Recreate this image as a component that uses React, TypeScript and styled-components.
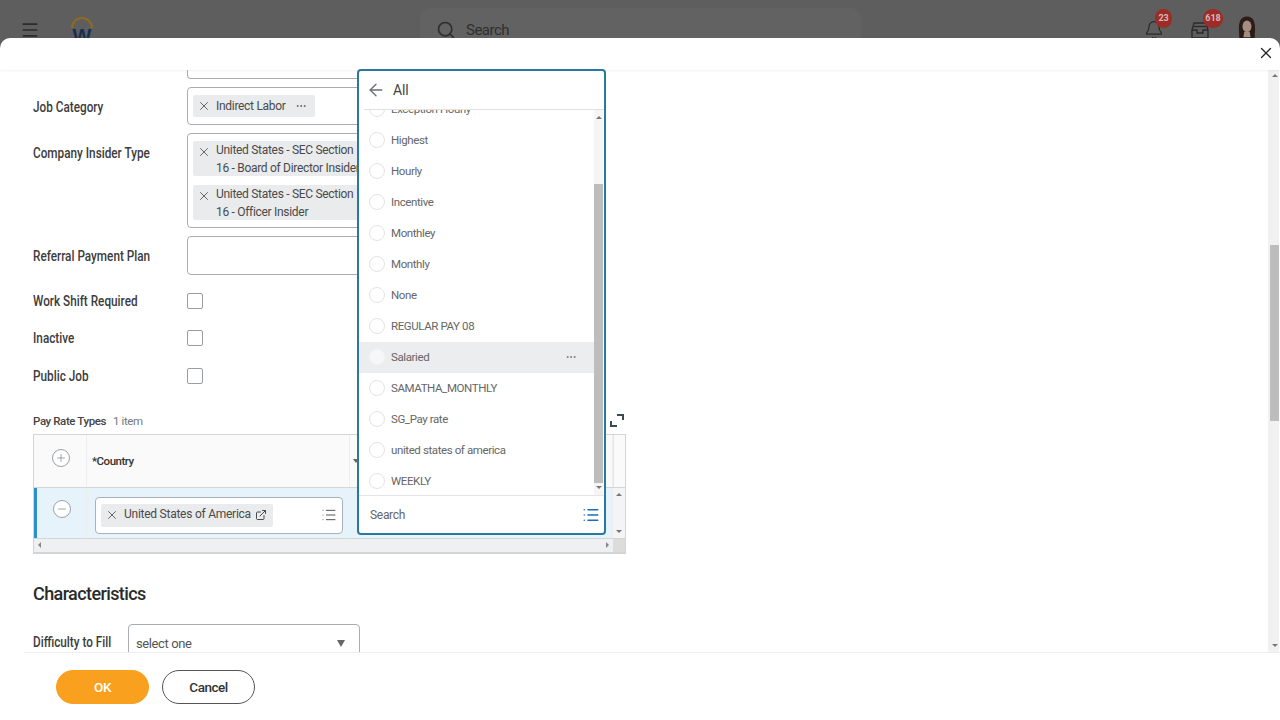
import { ArrowLeft, Bell, ExternalLink, List, Menu, Minus, MoreHorizontal, Plus, Search, X } from "lucide-react";
import styled, { createGlobalStyle } from "styled-components";

const GlobalStyle = createGlobalStyle`
  html, body {
    margin: 0;
    padding: 0;
    background: #5e5e5e;
  }
  * {
    box-sizing: border-box;
  }
`;

const Page = styled.div`
  width: 1280px;
  height: 720px;
  display: flex;
  flex-direction: column;
  overflow: hidden;
  background: #5e5e5e;
  font-family: Roboto, "Liberation Sans", sans-serif;
`;

const TopBar = styled.header`
  height: 38px;
  flex: none;
  display: flex;
  align-items: flex-start;
  overflow: hidden;
  padding: 8px 24px 0 20px;
  color: #2b2b2b;
`;
const MenuButton = styled.div`
  width: 20px;
  margin-top: 12px;
  display: flex;
`;
const Logo = styled.div`
  width: 24px;
  margin: 7px 0 0 30px;
  display: flex;
  flex-direction: column;
  align-items: center;
  position: relative;
`;
const LogoW = styled.span`
  position: absolute;
  top: 10px;
  font: 700 20px "Liberation Sans", sans-serif;
  color: #17304f;
`;
const SearchBox = styled.div`
  width: 442px;
  height: 40px;
  margin-left: 326px;
  padding: 3px 0 0 16px;
  display: flex;
  align-items: center;
  gap: 10px;
  border-radius: 10px 10px 0 0;
  background: #626262;
  font-size: 15px;
  letter-spacing: -0.5px;
  color: #2f2f2f;
`;
const NoticeIcon = styled.div<{ $left: number }>`
  width: 18px;
  margin: 12px 0 0 ${(p) => p.$left}px;
  position: relative;
`;
const Badge = styled.span<{ $right: number; $w: number }>`
  position: absolute;
  top: -11px;
  right: ${(p) => p.$right}px;
  width: ${(p) => p.$w}px;
  height: 19px;
  border-radius: 10px;
  background: #9c2c26;
  color: #d8b8b6;
  font-size: 9px;
  font-weight: 700;
  line-height: 19px;
  text-align: center;
`;
const Avatar = styled.svg`
  margin: 7px 0 0 29px;
`;

const Modal = styled.main`
  flex: 1;
  min-height: 0;
  position: relative;
  display: flex;
  flex-direction: column;
  background: #fff;
  border-radius: 10px 10px 0 0;
`;
const ModalHeader = styled.div`
  height: 32px;
  flex: none;
  display: flex;
  align-items: center;
  justify-content: flex-end;
  padding: 0 5px 2px 0;
  color: #222;
  box-shadow: 0 1px 2px rgba(0, 0, 0, 0.05);
  position: relative;
  z-index: 1;
`;
const ModalBody = styled.div`
  flex: 1;
  min-height: 0;
  display: flex;
  overflow: hidden;
`;
const Form = styled.form`
  flex: 1;
  padding-left: 33px;
  display: flex;
  flex-direction: column;
  align-items: flex-start;
`;
const CutOffBox = styled.div`
  width: 300px;
  height: 9px;
  margin-left: 154px;
  flex: none;
  border: 1px solid #a9adb1;
  border-top: 0;
  border-radius: 0 0 4px 4px;
`;
const Row = styled.div<{ $top: number; $h?: number }>`
  display: flex;
  flex: none;
  align-items: flex-start;
  margin-top: ${(p) => p.$top}px;
  height: ${(p) => (p.$h ? `${p.$h}px` : "auto")};
`;
const CheckRow = styled.div`
  height: 37.5px;
  flex: none;
  display: flex;
  align-items: center;
`;
const CheckGroup = styled.div`
  margin-top: 7px;
  display: flex;
  flex-direction: column;
`;
const Label = styled.label<{ $w?: number; $pt?: number }>`
  width: ${(p) => p.$w ?? 154}px;
  flex: none;
  padding-top: ${(p) => p.$pt ?? 0}px;
  font-size: 14px;
  font-weight: 500;
  color: #3c3c3c;
  white-space: nowrap;
  transform: scaleX(0.84);
  transform-origin: left center;
`;
const InputBox = styled.div<{ $h?: number }>`
  width: 300px;
  min-height: ${(p) => p.$h ?? 38}px;
  padding: 7px 5px;
  display: flex;
  flex-direction: column;
  align-items: flex-start;
  gap: 9px;
  border: 1px solid #a9adb1;
  border-radius: 4px;
  background: #fff;
`;
const Chip = styled.div`
  display: flex;
  align-items: flex-start;
  flex: none;
  min-height: 22px;
  padding: 0 8px 0 4px;
  background: #e9ebec;
  border-radius: 2px;
  font-size: 12px;
  line-height: 17.5px;
  letter-spacing: -0.3px;
  color: #4a4a4a;
  white-space: nowrap;
`;
const ChipClose = styled.span`
  width: 19px;
  flex: none;
  display: flex;
  align-items: center;
  height: 22px;
  color: #555;
`;
const ChipText = styled.span<{ $single?: boolean }>`
  padding: ${(p) => (p.$single ? "3px 0 1px" : "1px 0 0")};
  margin-bottom: ${(p) => (p.$single ? "0" : "-1px")};
`;
const ChipMenu = styled.span`
  display: flex;
  align-items: center;
  height: 22px;
  margin-left: 9px;
  color: #666;
`;
const Checkbox = styled.span`
  width: 16px;
  height: 16px;
  border: 1px solid #9a9ea2;
  border-radius: 2px;
  background: #fff;
`;
const CaptionRow = styled.div`
  width: 593px;
  height: 20px;
  margin-top: 16px;
  flex: none;
  padding-right: 2px;
  display: flex;
  align-items: center;
  gap: 7px;
  font-size: 11.5px;
  letter-spacing: -0.4px;
  color: #777;
`;
const CaptionTitle = styled.span`
  font-weight: 500;
  color: #444;
`;
const ExpandIcon = styled.svg`
  margin-left: auto;
`;

const Table = styled.div`
  width: 593px;
  height: 120px;
  margin-top: 3px;
  flex: none;
  display: flex;
  flex-direction: column;
  border: 1px solid #d3d6d8;
  border-bottom-width: 2px;
`;
const TableRow = styled.div<{ $h: number; $active?: boolean }>`
  height: ${(p) => p.$h}px;
  flex: none;
  display: grid;
  grid-template-columns: 53px 263px 1fr 12px;
  background: ${(p) => (p.$active ? "#e7f3fa" : "#fafafa")};
  border-bottom: 1px solid #d3d6d8;
  box-shadow: ${(p) => (p.$active ? "inset 3px 0 0 #2e8fcf" : "none")};
`;
const Cell = styled.div<{ $pad?: string }>`
  display: flex;
  align-items: center;
  padding: ${(p) => p.$pad ?? "0"};
  border-right: 1px solid #eceeef;
`;
const RoundButton = styled.span<{ $top: number; $left: number }>`
  width: 18px;
  height: 18px;
  margin: ${(p) => p.$top}px 0 0 ${(p) => p.$left}px;
  display: flex;
  align-items: center;
  justify-content: center;
  align-self: flex-start;
  border: 1px solid #98a2a8;
  border-radius: 50%;
  color: #7f8a90;
  background: #fff;
`;
const ColumnTitle = styled.span`
  font-size: 11.5px;
  font-weight: 500;
  letter-spacing: -0.5px;
  color: #333;
`;
const SortMark = styled.span`
  width: 0;
  height: 0;
  margin-left: 3px;
  border: 3px solid transparent;
  border-top: 4px solid #666;
  border-bottom: 0;
`;
const RowInput = styled.div`
  width: 248px;
  height: 37px;
  margin-top: 9px;
  align-self: flex-start;
  padding: 0 5px;
  display: flex;
  align-items: center;
  border: 1px solid #a9b1b6;
  border-radius: 4px;
  background: #fff;
  color: #555;
`;
const RowChip = styled(Chip)`
  height: 23px;
  align-items: center;
  width: 172px;
  padding-right: 6px;
  letter-spacing: -0.25px;
`;
const LinkIcon = styled.span`
  margin-left: auto;
  display: flex;
`;
const RowList = styled.span`
  margin-left: auto;
  display: flex;
`;
const Track = styled.div<{ $w: number; $pl?: number; $mr?: number; $bg: string }>`
  width: ${(p) => p.$w}px;
  flex: none;
  margin-right: ${(p) => p.$mr ?? 0}px;
  padding-left: ${(p) => p.$pl ?? 0}px;
  display: flex;
  flex-direction: column;
  align-items: center;
  background: ${(p) => p.$bg};
`;
const Thumb = styled.div<{ $top: number; $h: number }>`
  width: 100%;
  height: ${(p) => p.$h}px;
  margin-top: ${(p) => p.$top}px;
  flex: none;
  background: #bdbdbd;
`;
const Arrow = styled.span<{ $dir: "up" | "down"; $gap: number }>`
  width: 0;
  height: 0;
  flex: none;
  border-left: 3px solid transparent;
  border-right: 3px solid transparent;
  border-${(p) => (p.$dir === "up" ? "bottom" : "top")}: 3px solid #777;
  margin-top: ${(p) => (p.$dir === "up" ? `${p.$gap}px` : "auto")};
  margin-bottom: ${(p) => (p.$dir === "down" ? `${p.$gap}px` : "0")};
`;
const RowScroll = styled.div`
  display: flex;
  flex-direction: column;
  align-items: center;
  justify-content: space-between;
  padding: 5px 0;
  background: #f3f4f5;
`;
const HeadEnd = styled.div`
  background: #fafafa;
  border-left: 1px solid #e4e6e7;
`;
const ScrollBar = styled.div`
  flex: 1;
  display: flex;
  align-items: center;
  background: #eef0f1;
  padding-left: 4px;
`;
const ScrollEnd = styled.div`
  width: 12px;
  align-self: stretch;
  margin-left: 4px;
  background: #dcdcdc;
`;
const SideArrow = styled.span<{ $dir: "left" | "right" }>`
  width: 0;
  height: 0;
  border-top: 3px solid transparent;
  border-bottom: 3px solid transparent;
  border-${(p) => (p.$dir === "left" ? "right" : "left")}: 3px solid #888;
  margin-left: ${(p) => (p.$dir === "right" ? "auto" : "0")};
`;
const SectionTitle = styled.h2`
  height: 24px;
  margin: 28px 0 0;
  flex: none;
  font-size: 18px;
  font-weight: 500;
  line-height: 24px;
  letter-spacing: -0.6px;
  color: #2a2a2a;
`;
const SelectBox = styled.div`
  width: 232px;
  height: 40px;
  padding: 0 14px 0 7px;
  display: flex;
  align-items: flex-start;
  justify-content: space-between;
  border: 1px solid #a9adb1;
  border-radius: 4px;
  font-size: 13px;
  line-height: 37px;
  letter-spacing: -0.4px;
  color: #555;
`;
const SelectCaret = styled.span`
  width: 0;
  height: 0;
  margin-top: 15px;
  border-left: 4px solid transparent;
  border-right: 4px solid transparent;
  border-top: 7px solid #666;
`;

const Footer = styled.footer`
  height: 68px;
  flex: none;
  margin-left: 24px;
  padding: 17px 0 0 32px;
  display: flex;
  align-items: flex-start;
  gap: 13px;
  border-top: 1px solid #eee;
`;
const PillButton = styled.button<{ $primary?: boolean }>`
  width: 93px;
  height: 34px;
  padding: 0;
  border-radius: 17px;
  border: 1px solid ${(p) => (p.$primary ? "#f9a11f" : "#555")};
  background: ${(p) => (p.$primary ? "#f9a11f" : "#fff")};
  color: ${(p) => (p.$primary ? "#fff" : "#333")};
  font: 500 13.5px Roboto, sans-serif;
  letter-spacing: -0.5px;
`;

const Popup = styled.section`
  position: absolute;
  top: 31px;
  left: 357px;
  width: 249px;
  height: 466px;
  z-index: 2;
  display: flex;
  flex-direction: column;
  background: #fff;
  border: 2px solid #28799d;
  border-radius: 4px;
`;
const PopupHeader = styled.div`
  height: 39px;
  flex: none;
  margin-left: 5px;
  padding-left: 2px;
  display: flex;
  align-items: center;
  gap: 7px;
  border-bottom: 1px solid #dfe1e2;
  color: #6b6f72;
`;
const PopupTitle = styled.span`
  font-size: 14px;
  letter-spacing: -0.2px;
  color: #444;
`;
const PopupList = styled.div`
  flex: 1;
  min-height: 0;
  display: flex;
`;
const Options = styled.ul`
  flex: 1;
  margin: 0;
  padding: 0;
  overflow: hidden;
  list-style: none;
`;
const Option = styled.li<{ $hover?: boolean; $first?: boolean }>`
  height: 31px;
  margin-top: ${(p) => (p.$first ? "-16.5px" : "0")};
  padding: 0 17px 0 10px;
  display: flex;
  align-items: center;
  gap: 6px;
  background: ${(p) => (p.$hover ? "#ebedee" : "transparent")};
  font-size: 11.5px;
  letter-spacing: -0.4px;
  color: #666;
`;
const Radio = styled.span<{ $hover?: boolean }>`
  width: 16px;
  height: 16px;
  flex: none;
  border: 1px solid ${(p) => (p.$hover ? "#f4f5f6" : "#e2e3e4")};
  border-radius: 50%;
  background: ${(p) => (p.$hover ? "#f6f7f8" : "#fff")};
`;
const OptionMenu = styled.span`
  margin-left: auto;
  display: flex;
  color: #777;
`;
const PopupFooter = styled.div`
  height: 38px;
  flex: none;
  padding: 1px 4px 0 11px;
  display: flex;
  align-items: center;
  justify-content: space-between;
  border-top: 1px solid #e3e5e6;
  font-size: 12px;
  letter-spacing: -0.3px;
  color: #666;
`;
const BlueList = styled.span`
  display: flex;
  color: #1c6db3;
`;

const options = [
  "Exception Hourly",
  "Highest",
  "Hourly",
  "Incentive",
  "Monthley",
  "Monthly",
  "None",
  "REGULAR PAY 08",
  "Salaried",
  "SAMATHA_MONTHLY",
  "SG_Pay rate",
  "united states of america",
  "WEEKLY",
];

const App = () => (
  <Page>
    <GlobalStyle />
    <TopBar>
      <MenuButton>
        <Menu size={20} strokeWidth={2} />
      </MenuButton>
      <Logo>
        <svg width="24" height="14" viewBox="0 0 24 14">
          <path d="M2 13 A10 10 0 0 1 22 13" fill="none" stroke="#8f6a23" strokeWidth="2" />
        </svg>
        <LogoW>W</LogoW>
      </Logo>
      <SearchBox>
        <Search size={20} />
        Search
      </SearchBox>
      <NoticeIcon $left={283}>
        <Bell size={20} strokeWidth={1.5} />
        <Badge $right={-10} $w={17}>23</Badge>
      </NoticeIcon>
      <NoticeIcon $left={29}>
        <svg width="18" height="20" viewBox="0 0 18 20" fill="none" stroke="currentColor" strokeWidth="1.4">
          <path d="M3 3 H15 L17 10 V18 H1 V10 Z" />
          <path d="M3 6.5 H15" />
          <path d="M1 10 H6 V13 H12 V10 H17" />
        </svg>
        <Badge $right={-14} $w={20}>618</Badge>
      </NoticeIcon>
      <Avatar width="18" height="30" viewBox="0 0 20 30">
        <path d="M10 0 C3 0 1 6 1 13 C1 20 2 24 1 30 L19 30 C18 24 19 20 19 13 C19 6 17 0 10 0Z" fill="#2b1c1a" />
        <ellipse cx="10" cy="11" rx="5" ry="6.5" fill="#a58d80" />
        <path d="M7 17 L13 17 L14 23 L6 23Z" fill="#a58d80" />
      </Avatar>
    </TopBar>
    <Modal>
      <ModalHeader>
        <X size={18} strokeWidth={1.7} />
      </ModalHeader>
      <ModalBody>
        <Form>
          <CutOffBox />
          <Row $top={8}>
            <Label $pt={12}>Job Category</Label>
            <InputBox>
              <Chip>
                <ChipClose>
                  <X size={14} strokeWidth={1.5} />
                </ChipClose>
                <ChipText $single>Indirect Labor</ChipText>
                <ChipMenu>
                  <MoreHorizontal size={12} />
                </ChipMenu>
              </Chip>
            </InputBox>
          </Row>
          <Row $top={8}>
            <Label $pt={12}>Company Insider Type</Label>
            <InputBox>
              <Chip>
                <ChipClose>
                  <X size={14} strokeWidth={1.5} />
                </ChipClose>
                <ChipText>
                  United States - SEC Section
                  <br />
                  16 - Board of Director Insider
                </ChipText>
              </Chip>
              <Chip>
                <ChipClose>
                  <X size={14} strokeWidth={1.5} />
                </ChipClose>
                <ChipText>
                  United States - SEC Section
                  <br />
                  16 - Officer Insider
                </ChipText>
              </Chip>
            </InputBox>
          </Row>
          <Row $top={8}>
            <Label $pt={12}>Referral Payment Plan</Label>
            <InputBox $h={39} />
          </Row>
          <CheckGroup>
            <CheckRow>
              <Label>Work Shift Required</Label>
              <Checkbox />
            </CheckRow>
            <CheckRow>
              <Label>Inactive</Label>
              <Checkbox />
            </CheckRow>
            <CheckRow>
              <Label>Public Job</Label>
              <Checkbox />
            </CheckRow>
          </CheckGroup>
          <CaptionRow>
            <CaptionTitle>Pay Rate Types</CaptionTitle>
            1 item
            <ExpandIcon width="14" height="15" viewBox="0 0 14 15" fill="none" stroke="#3c4a52" strokeWidth="2">
              <path d="M7 2 H13 V7" />
              <path d="M1 8 V13 H7" />
            </ExpandIcon>
          </CaptionRow>
          <Table>
            <TableRow $h={53}>
              <Cell>
                <RoundButton $top={14} $left={18}>
                  <Plus size={12} strokeWidth={1.5} />
                </RoundButton>
              </Cell>
              <Cell $pad="0 0 0 5px">
                <ColumnTitle>*Country</ColumnTitle>
              </Cell>
              <Cell>
                <SortMark />
              </Cell>
              <HeadEnd />
            </TableRow>
            <TableRow $h={51} $active>
              <Cell>
                <RoundButton $top={12} $left={19}>
                  <Minus size={12} strokeWidth={1.5} />
                </RoundButton>
              </Cell>
              <Cell $pad="0 0 0 8px">
                <RowInput>
                  <RowChip>
                    <ChipClose>
                      <X size={14} strokeWidth={1.5} />
                    </ChipClose>
                    United States of America
                    <LinkIcon>
                      <ExternalLink size={12} />
                    </LinkIcon>
                  </RowChip>
                  <RowList>
                    <List size={16} strokeWidth={1.5} />
                  </RowList>
                </RowInput>
              </Cell>
              <Cell />
              <RowScroll>
                <Arrow $dir="up" $gap={0} />
                <Arrow $dir="down" $gap={0} />
              </RowScroll>
            </TableRow>
            <ScrollBar>
              <SideArrow $dir="left" />
              <SideArrow $dir="right" />
              <ScrollEnd />
            </ScrollBar>
          </Table>
          <SectionTitle>Characteristics</SectionTitle>
          <Row $top={18} $h={40}>
            <Label $w={95} $pt={10}>Difficulty to Fill</Label>
            <SelectBox>
              select one
              <SelectCaret />
            </SelectBox>
          </Row>
        </Form>
        <Track $w={11} $pl={2} $mr={1} $bg="#f1f1f1">
          <Arrow $dir="up" $gap={4} />
          <Thumb $top={168} $h={176} />
          <Arrow $dir="down" $gap={5} />
        </Track>
      </ModalBody>
      <Footer>
        <PillButton $primary type="button">OK</PillButton>
        <PillButton type="button">Cancel</PillButton>
      </Footer>
      <Popup>
        <PopupHeader>
          <ArrowLeft size={20} strokeWidth={1.6} />
          <PopupTitle>All</PopupTitle>
        </PopupHeader>
        <PopupList>
          <Options>
            {options.map((name, i) => (
              <Option key={name} $first={i === 0} $hover={name === "Salaried"}>
                <Radio $hover={name === "Salaried"} />
                {name}
                {name === "Salaried" && (
                  <OptionMenu>
                    <MoreHorizontal size={12} />
                  </OptionMenu>
                )}
              </Option>
            ))}
          </Options>
          <Track $w={9} $mr={1} $bg="#f5f5f5">
            <Arrow $dir="up" $gap={6} />
            <Thumb $top={65} $h={299} />
            <Arrow $dir="down" $gap={6} />
          </Track>
        </PopupList>
        <PopupFooter>
          Search
          <BlueList>
            <List size={18} strokeWidth={2} />
          </BlueList>
        </PopupFooter>
      </Popup>
    </Modal>
  </Page>
);

export default App;
